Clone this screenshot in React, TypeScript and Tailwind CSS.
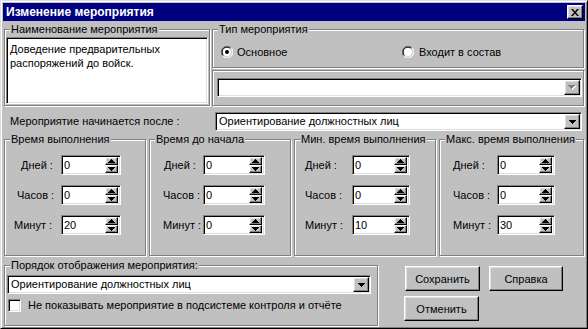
import type { ReactNode } from "react";

const raised =
  "border border-t-white border-l-white border-r-black border-b-black shadow-[inset_-1px_-1px_0_#808080,inset_1px_1px_0_#dfdfdf] bg-[#c0c0c0]";
const sunken =
  "border border-t-[#808080] border-l-[#808080] border-r-white border-b-white shadow-[inset_1px_1px_0_#000,inset_-1px_-1px_0_#dfdfdf] bg-white";
const etched = "border border-[#808080] shadow-[inset_1px_1px_0_#fff,1px_1px_0_#fff]";

function GroupBox({ label, className, children }: { label?: string; className: string; children?: ReactNode }) {
  return (
    <div className={`relative ${etched} ${className}`}>
      {label && (
        <span className="absolute left-[5px] -top-[8px] bg-[#c0c0c0] px-[1px] leading-[14px] whitespace-nowrap">
          {label}
        </span>
      )}
      {children}
    </div>
  );
}

function Arrow({ up, color = "#000" }: { up?: boolean; color?: string }) {
  return (
    <svg width="7" height="4" viewBox="0 0 7 4">
      <path d={up ? "M3 0h1v1h1v1h1v1h1v1H0V3h1V2h1V1h1z" : "M0 0h7v1H6v1H5v1H4v1H3V3H2V2H1V1H0z"} fill={color} />
    </svg>
  );
}

function ComboBox({ value, className, disabled }: { value?: string; className: string; disabled?: boolean }) {
  return (
    <div className={`${sunken} ${className} flex items-stretch p-[1px]`}>
      <span className="flex-1 pl-[2px] leading-[15px] whitespace-nowrap overflow-hidden">{value}</span>
      <div className={`${raised} w-[16px] flex items-center justify-center`}>
        {disabled ? (
          <svg width="8" height="5" viewBox="0 0 8 5">
            <path d="M1 1h7v1H7v1H6v1H5v1H4V4H3V3H2V2H1z" fill="#fff" />
            <path d="M0 0h7v1H6v1H5v1H4v1H3V3H2V2H1V1H0z" fill="#808080" />
          </svg>
        ) : (
          <Arrow />
        )}
      </div>
    </div>
  );
}

function SpinEdit({ label, value, labelClass, editClass }: { label: string; value: string; labelClass: string; editClass: string }) {
  return (
    <div className="flex items-center h-[20px]">
      <span className={`${labelClass} whitespace-nowrap`}>{label}</span>
      <div className={`${sunken} ${editClass} h-[20px] flex items-center pr-[2px]`}>
        <span className="flex-1 pl-[2px] leading-[14px]">{value}</span>
        <div className="flex flex-col w-[13px]">
          <div className={`${raised} h-[8px] flex items-center justify-center`}>
            <Arrow up />
          </div>
          <div className={`${raised} h-[8px] flex items-center justify-center`}>
            <Arrow />
          </div>
        </div>
      </div>
    </div>
  );
}

function Radio({ checked }: { checked?: boolean }) {
  return (
    <svg width="12" height="12" viewBox="0 0 12 12">
      <path d="M1.8 10.2A5.5 5.5 0 0 1 10.2 1.8" stroke="#808080" fill="none" />
      <path d="M10.2 1.8A5.5 5.5 0 0 1 1.8 10.2" stroke="#fff" fill="none" />
      <path d="M2.5 9.5A4.5 4.5 0 0 1 9.5 2.5" stroke="#000" fill="none" />
      <path d="M9.5 2.5A4.5 4.5 0 0 1 2.5 9.5" stroke="#dfdfdf" fill="none" />
      <circle cx="6" cy="6" r="4" fill="#fff" />
      {checked && <circle cx="6" cy="6" r="2" fill="#000" />}
    </svg>
  );
}

function Button({ label, className }: { label: string; className: string }) {
  return (
    <button className={`${raised} ${className} h-[25px] flex items-center justify-center leading-[14px]`}>{label}</button>
  );
}

type Row = { label: string; value: string; labelClass: string };
type Group = { title: string; width: string; editClass: string; rows: Row[] };

const groups: Group[] = [
  {
    title: "Время выполнения",
    width: "w-[142px]",
    editClass: "w-[60px]",
    rows: [
      { label: "Дней :", value: "0", labelClass: "w-[56px] pl-[16px]" },
      { label: "Часов :", value: "0", labelClass: "w-[56px] pl-[12px]" },
      { label: "Минут :", value: "20", labelClass: "w-[56px] pl-[9px]" },
    ],
  },
  {
    title: "Время до начала",
    width: "w-[142px]",
    editClass: "w-[62px]",
    rows: [
      { label: "Дней :", value: "0", labelClass: "w-[53px] pl-[14px]" },
      { label: "Часов :", value: "0", labelClass: "w-[53px] pl-[13px]" },
      { label: "Минут :", value: "0", labelClass: "w-[53px] pl-[13px]" },
    ],
  },
  {
    title: "Мин. время выполнения",
    width: "w-[142px]",
    editClass: "w-[58px]",
    rows: [
      { label: "Дней :", value: "0", labelClass: "w-[57px] pl-[10px]" },
      { label: "Часов :", value: "0", labelClass: "w-[57px] pl-[10px]" },
      { label: "Минут :", value: "10", labelClass: "w-[57px] pl-[10px]" },
    ],
  },
  {
    title: "Макс. время выполнения",
    width: "w-[145px]",
    editClass: "w-[58px]",
    rows: [
      { label: "Дней :", value: "0", labelClass: "w-[57px] pl-[13px]" },
      { label: "Часов :", value: "0", labelClass: "w-[57px] pl-[13px]" },
      { label: "Минут :", value: "30", labelClass: "w-[57px] pl-[13px]" },
    ],
  },
];

export default function App() {
  return (
    <div className="w-[588px] h-[329px] bg-[#c0c0c0] border border-t-[#dfdfdf] border-l-[#dfdfdf] border-r-black border-b-black shadow-[inset_1px_1px_0_#fff,inset_-1px_-1px_0_#808080] p-[2px] flex flex-col text-[11px] text-black font-['Liberation_Sans',Arial,sans-serif] overflow-hidden">
      {/* заголовок окна */}
      <div className="h-[18px] shrink-0 bg-[#000080] flex items-center justify-between pl-[3px] pr-[2px]">
        <span className="text-white font-bold text-[12px] leading-[16px]">Изменение мероприятия</span>
        <button className={`${raised} w-[16px] h-[14px] flex items-center justify-center`}>
          <svg width="8" height="7" viewBox="0 0 8 7">
            <path d="M0 0h2l2 2.5L6 0h2L5 3.5 8 7H6L4 4.5 2 7H0l3-3.5z" fill="#000" />
          </svg>
        </button>
      </div>

      {/* наименование и тип */}
      <div className="flex mt-[8px] ml-[1px] shrink-0">
        <GroupBox label="Наименование мероприятия" className="w-[206px] h-[77px] pt-[7px] pl-[1px]">
          <div className={`${sunken} w-[202px] h-[67px] px-[3px] pt-[4px] leading-[14px]`}>
            Доведение предварительных
            <br />
            распоряжений до войск.
          </div>
        </GroupBox>
        <div className="ml-[2px] w-[372px] flex flex-col">
          <GroupBox label="Тип мероприятия" className="h-[39px] pt-[16px] pl-[8px]">
            <div className="flex items-center h-[12px]">
              <div className="flex items-center w-[181px]">
                <Radio checked />
                <span className="ml-[4px] leading-[12px]">Основное</span>
              </div>
              <div className="flex items-center">
                <Radio />
                <span className="ml-[5px] leading-[12px]">Входит в состав</span>
              </div>
            </div>
          </GroupBox>
          <GroupBox className="mt-[2px] h-[36px] pt-[7px] pl-[4px]">
            <ComboBox disabled className="w-[365px] h-[19px]" />
          </GroupBox>
        </div>
      </div>

      {/* начинается после */}
      <div className="flex items-center h-[19px] mt-[6px] shrink-0">
        <span className="ml-[7px] flex-1">Мероприятие начинается после :</span>
        <ComboBox value="Ориентирование должностных лиц" className="w-[367px] h-[19px] mr-[3px]" />
      </div>

      {/* времена */}
      <div className="flex gap-[3px] mt-[8px] ml-[1px] shrink-0">
        {groups.map((g) => (
          <GroupBox key={g.title} label={g.title} className={`${g.width} h-[117px] pt-[15px] flex flex-col gap-[10px]`}>
            {g.rows.map((r) => (
              <SpinEdit key={r.label} label={r.label} value={r.value} labelClass={r.labelClass} editClass={g.editClass} />
            ))}
          </GroupBox>
        ))}
      </div>

      {/* порядок и кнопки */}
      <div className="flex mt-[9px] ml-[1px] shrink-0">
        <GroupBox label="Порядок отображения мероприятия:" className="w-[374px] h-[61px] pt-[9px] pl-[2px]">
          <ComboBox value="Ориентирование должностных лиц" className="w-[364px] h-[19px]" />
          <div className="flex items-center mt-[3px] ml-[1px]">
            <div className={`${sunken} w-[13px] h-[13px]`} />
            <span className="ml-[7px]">Не показывать мероприятие в подсистеме контроля и отчёте</span>
          </div>
        </GroupBox>
        <div className="ml-[26px] mt-[1px] flex flex-col">
          <div className="flex gap-[9px] ml-[1px]">
            <Button label="Сохранить" className="w-[75px]" />
            <Button label="Справка" className="w-[74px]" />
          </div>
          <Button label="Отменить" className="w-[75px] mt-[5px]" />
        </div>
      </div>
    </div>
  );
}
